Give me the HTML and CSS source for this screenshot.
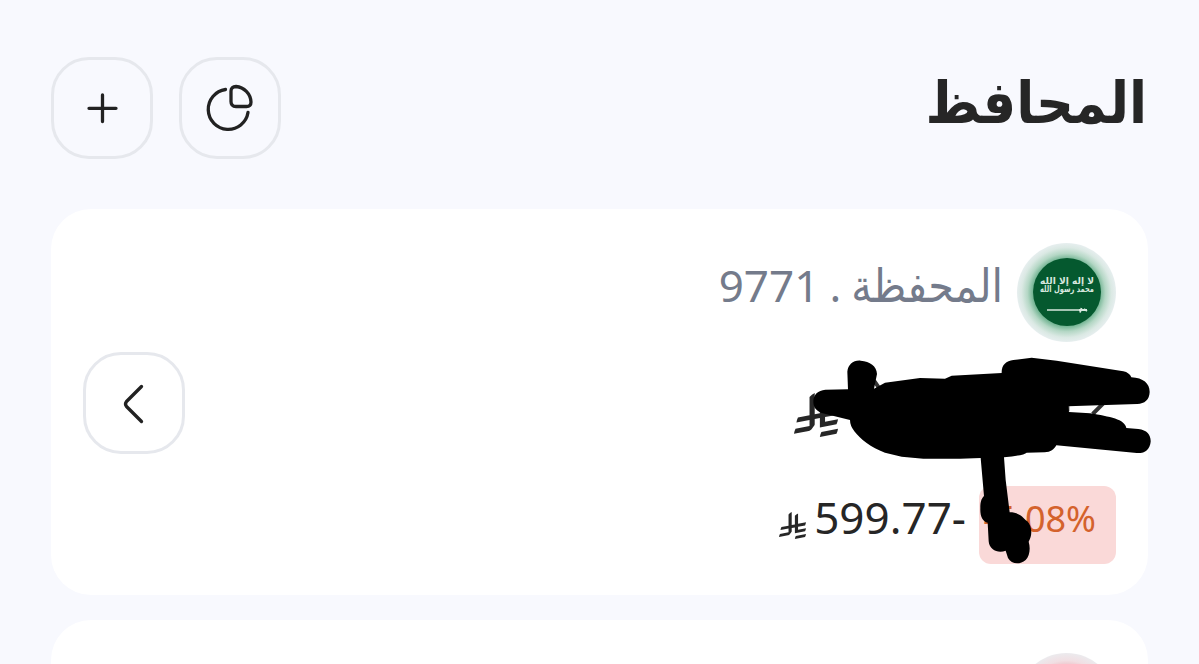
FILE: index.html
```html
<!DOCTYPE html>
<html lang="ar" dir="rtl">
<head>
    <meta charset="UTF-8">
    <meta name="viewport" content="width=device-width, initial-scale=1.0">
    <title>المحافظ</title>
    <link rel="stylesheet" href="styles.css">
</head>
<body>
    <svg width="0" height="0" class="symbols">
        <symbol id="riyal" viewBox="0 0 1124.14 1256.39" preserveAspectRatio="none">
            <path d="M699.62,1113.02c-20.06,44.48-33.32,92.75-38.4,143.37l424.51-90.24c20.06-44.47,33.31-92.75,38.4-143.37l-424.51,90.24Z"/>
            <path d="M1085.73,895.8c20.06-44.47,33.32-92.75,38.4-143.37l-330.68,70.33v-135.2l292.27-62.11c20.06-44.47,33.32-92.75,38.4-143.37l-330.68,70.27V66.13c-50.67,28.45-95.67,66.32-132.25,110.99v403.35l-132.25,28.11V0c-50.67,28.44-95.67,66.32-132.25,110.99v525.69l-295.91,62.88c-20.06,44.47-33.33,92.75-38.42,143.37l334.33-71.05v170.26l-358.3,76.14c-20.06,44.47-33.32,92.75-38.4,143.37l375.04-79.7c30.53-6.35,56.77-24.4,73.83-49.24l68.78-101.97v-.02c7.14-10.55,11.3-23.27,11.3-36.97v-149.98l132.25-28.11v270.4l424.53-90.28Z"/>
        </symbol>
    </svg>

    <header class="header">
        <h1 class="title">المحافظ</h1>
        <div class="actions">
            <button class="icon-button">
                <svg width="50" height="50" viewBox="0 0 50 50">
                    <path d="M20.500 6.500A20 20 0 1 0 43 29.500"/>
                    <path d="M26 8Q26 3.500 31 3.500A16.500 16.500 0 0 1 46 19Q46 23.500 41.500 23.500H31Q26 23.500 26 18.500Z"/>
                </svg>
            </button>
            <button class="icon-button">
                <svg width="50" height="50" viewBox="0 0 50 50">
                    <path d="M25.500 12V38.500M12 25.300H39"/>
                </svg>
            </button>
        </div>
    </header>

    <main class="wallets">
        <section class="card">
            <div class="card-info">
                <div class="wallet-name">
                    <div class="flag">
                        <svg width="68" height="68" viewBox="0 0 68 68">
                            <circle cx="34" cy="34" r="34" fill="#05592f"/>
                            <text class="shahada" x="34" y="26" textLength="54" lengthAdjust="spacingAndGlyphs">لا إله إلا الله</text>
                            <text class="shahada" x="34" y="34" textLength="54" lengthAdjust="spacingAndGlyphs">محمد رسول الله</text>
                            <path d="M14 52H47" stroke="#d8e8df" stroke-width="1.700"/>
                            <path d="M46 52H54M48.500 50L47 54.500M51 51l3 2" stroke="#d8e8df" stroke-width="1.800"/>
                        </svg>
                    </div>
                    <span class="wallet-label">المحفظة</span>
                    <span class="wallet-dot">.</span>
                    <span class="wallet-number">9771</span>
                </div>
                <div class="balance">
                    <svg class="riyal-large"><use href="#riyal"/></svg>
                </div>
                <div class="change">
                    <span class="percent" dir="ltr">-5.08%</span>
                    <span class="amount" dir="ltr">599.77-</span>
                    <svg class="riyal-small"><use href="#riyal"/></svg>
                </div>
            </div>
            <button class="icon-button">
                <svg width="50" height="50" viewBox="0 0 50 50">
                    <path d="M32.500 8.500L17.500 23.500Q15.500 26 17.500 28.500L32.500 43.500"/>
                </svg>
            </button>

            <!-- hides the balance -->
            <svg class="scribble" width="400" height="240" viewBox="0 0 1200 720">
                <path class="digit" d="M968 222L1000 190M892 190V214M312 122L326 142"/>
                <path d="M234 148L232 95C234 74 250 60 272 62C300 64 320 78 321 102L312 146L345 128L450 114L525 116L545 107L695 99C694 76 708 62 730 60L785 53L860 62L1060 94Q1078 98 1084 112C1120 114 1139 130 1139 156C1138 180 1124 191 1102 192L894 199L897 216L960 220C1020 230 1065 238 1069 264L1105 267C1132 270 1143 286 1142 305C1140 328 1124 341 1100 339L859 316C852 329 842 336 824 337L770 338Q762 346 702 352L707 420L719 517C748 517 756 530 772 544C786 558 788 585 776 605C782 625 779 648 767 660C748 676 724 672 714 654L707 632C686 641 658 631 656 604L653 548C638 544 630 529 631 505C631 484 634 477 642 468L632 354L570 356L460 356L395 350L345 338C302 322 272 299 253 274Q240 257 240 240L155 219C136 211 130 201 130 184C130 164 144 151 166 149Z"/>
            </svg>
        </section>

        <section class="card card-next">
            <div class="card-info">
                <div class="wallet-name">
                    <div class="flag flag-red"></div>
                </div>
            </div>
        </section>
    </main>
</body>
</html>
```
FILE: styles.css
```css
* {
    box-sizing: border-box;
}
body {
    margin: 0;
    height: 664px;
    overflow: hidden;
    background: #f8f9fe;
    color: #262626;
    font-family: "Noto Sans", "DejaVu Sans", sans-serif;
}
.symbols {
    position: absolute;
}
.header {
    display: flex;
    justify-content: space-between;
    height: 209px;
    padding: 57px 52px 0 51px;
}
.title {
    margin: 2px 0 0;
    font-family: "DejaVu Sans Condensed", "DejaVu Sans", sans-serif;
    font-stretch: condensed;
    font-size: 58.500px;
    line-height: 88px;
    font-weight: bold;
}
.actions {
    display: flex;
    gap: 26px;
}
.icon-button {
    display: flex;
    flex: none;
    align-items: center;
    justify-content: center;
    width: 102px;
    height: 102px;
    padding: 0;
    border: 3px solid #e6e8ed;
    border-radius: 38px;
    background: transparent;
}
.card .icon-button {
    margin-top: 2px;
}
.icon-button svg {
    fill: none;
    stroke: #222;
    stroke-width: 3.3;
    stroke-linecap: round;
    stroke-linejoin: round;
}
.wallets {
    display: flex;
    flex-direction: column;
    gap: 25px;
    padding: 0 51px;
}
.card {
    position: relative;
    display: flex;
    flex: none;
    align-items: center;
    justify-content: space-between;
    height: 386px;
    padding: 0 32px;
    border-radius: 40px;
    background: #fff;
}
.card-next {
    height: 44px;
    border-radius: 40px 40px 0 0;
    overflow: hidden;
}
.card-info {
    display: flex;
    flex-direction: column;
    height: 100%;
    padding-top: 33px;
}
.wallet-name {
    display: flex;
    align-items: center;
    height: 100px;
    color: #747b8b;
    font-size: 44px;
    line-height: 60px;
}
.flag {
    display: flex;
    flex: none;
    align-items: center;
    justify-content: center;
    width: 99px;
    height: 99px;
    margin-left: 14px;
    border-radius: 50%;
    background: radial-gradient(circle closest-side, #78b797 34px, #b4d7c5 39px, #dbe9e4 45px, #e8eff0 50px);
}
.flag-red {
    background: radial-gradient(circle closest-side, #eaa0a8 30px, #f1dfe3 42px, #ebebee 50px);
}
.shahada {
    fill: #d8e8df;
    font-family: "DejaVu Sans", sans-serif;
    font-size: 9px;
    font-weight: bold;
    text-anchor: middle;
}
.wallet-label {
    padding-bottom: 13px;
    font-family: "DejaVu Sans Condensed", "DejaVu Sans", sans-serif;
    font-stretch: condensed;
    font-size: 46px;
}
.wallet-dot,
.wallet-number {
    padding-bottom: 14px;
}
.wallet-dot {
    margin: 0 10px;
}
.balance {
    display: flex;
    align-items: flex-end;
    height: 95px;
    padding-right: 278px;
}
.riyal-large {
    width: 44px;
    height: 44px;
}
.change {
    display: flex;
    align-items: center;
    height: 78px;
    margin-top: 49px;
}
.percent {
    width: 137px;
    height: 78px;
    padding-right: 20px;
    border-radius: 12px;
    background: #fad9d8;
    color: #d4622c;
    font-size: 36px;
    line-height: 66px;
    text-align: right;
}
.amount {
    margin: 0 13px 17px 8px;
    font-size: 44px;
    line-height: 60px;
}
.riyal-small {
    width: 27px;
    height: 27px;
}
.riyal-large,
.riyal-small {
    fill: #262626;
}
.scribble {
    position: absolute;
    top: 131px;
    right: -22px;
}
.scribble .digit {
    fill: none;
    stroke: #333;
    stroke-width: 12;
}
```
